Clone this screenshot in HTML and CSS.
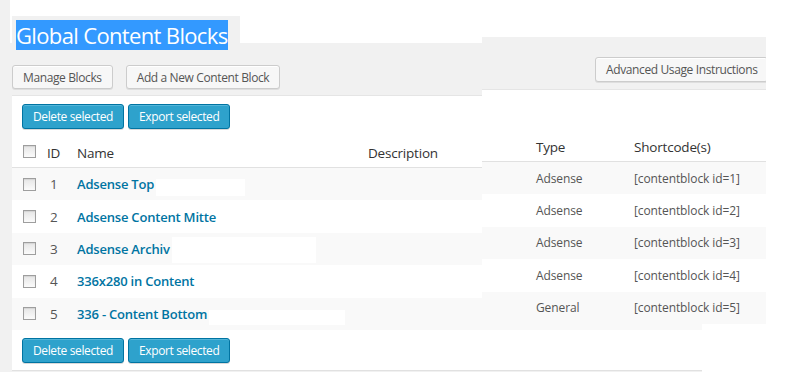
FILE: index.html
```html
<!DOCTYPE html>
<html lang="en">
    <head>
        <meta charset="UTF-8" />
        <title>Global Content Blocks</title>
        <link rel="stylesheet" href="styles.css">
    </head>
    <body>
        <div class="screen">
            <div class="admin">
                <div class="side"></div>
                <div class="main">
                    <div class="top-gap"></div>
                    <div class="title-row">
                        <div class="title-cell">
                            <h1 class="title"><span class="selected">Global Content Blocks</span></h1>
                        </div>
                    </div>
                    <div class="body">
                        <div class="actions">
                            <button class="button">Manage Blocks</button>
                            <button class="button">Add a New Content Block</button>
                        </div>
                        <div class="list-box">
                            <div class="bulk">
                                <button class="button-primary">Delete selected</button>
                                <button class="button-primary">Export selected</button>
                            </div>
                            <div class="list-head">
                                <span class="cell"><input type="checkbox" class="cb" /></span>
                                <span class="cell">ID</span>
                                <span class="cell">Name</span>
                                <span class="cell">Description</span>
                            </div>
                            <div class="list-row">
                                <span class="cell"><input type="checkbox" class="cb" /></span>
                                <span class="cell num">1</span>
                                <span class="cell"><a class="name">Adsense Top</a><span class="blank b1"></span></span>
                                <span class="cell"></span>
                            </div>
                            <div class="list-row">
                                <span class="cell"><input type="checkbox" class="cb" /></span>
                                <span class="cell num">2</span>
                                <span class="cell"><a class="name">Adsense Content Mitte</a></span>
                                <span class="cell"></span>
                            </div>
                            <div class="list-row">
                                <span class="cell"><input type="checkbox" class="cb" /></span>
                                <span class="cell num">3</span>
                                <span class="cell"><a class="name">Adsense Archiv</a><span class="blank b3"></span></span>
                                <span class="cell"></span>
                            </div>
                            <div class="list-row">
                                <span class="cell"><input type="checkbox" class="cb" /></span>
                                <span class="cell num">4</span>
                                <span class="cell"><a class="name">336x280 in Content</a></span>
                                <span class="cell"></span>
                            </div>
                            <div class="list-row">
                                <span class="cell"><input type="checkbox" class="cb" /></span>
                                <span class="cell num">5</span>
                                <span class="cell"><a class="name">336 - Content Bottom</a><span class="blank b5"></span></span>
                                <span class="cell"></span>
                            </div>
                            <div class="bulk">
                                <button class="button-primary">Delete selected</button>
                                <button class="button-primary">Export selected</button>
                            </div>
                        </div>
                    </div>
                </div>
            </div>

            <!-- right part of the page, pasted a few pixels higher -->
            <div class="patch">
                <div class="patch-top"></div>
                <div class="patch-bar">
                    <button class="button">Advanced Usage Instructions</button>
                </div>
                <div class="patch-box">
                    <div class="patch-spacer"></div>
                    <div class="patch-head">
                        <span class="cell">Type</span>
                        <span class="cell">Shortcode(s)</span>
                    </div>
                    <div class="patch-row"><span class="cell">Adsense</span><span class="cell">[contentblock id=1]</span></div>
                    <div class="patch-row"><span class="cell">Adsense</span><span class="cell">[contentblock id=2]</span></div>
                    <div class="patch-row"><span class="cell">Adsense</span><span class="cell">[contentblock id=3]</span></div>
                    <div class="patch-row"><span class="cell">Adsense</span><span class="cell">[contentblock id=4]</span></div>
                    <div class="patch-row"><span class="cell">General</span><span class="cell">[contentblock id=5]</span></div>
                </div>
            </div>
        </div>
    </body>
</html>
```

FILE: styles.css
```css
* {
    margin: 0;
    padding: 0;
    box-sizing: border-box;
}
body {
    font-family: "Open Sans", "Noto Sans", sans-serif;
    font-size: 13px;
    color: #444;
    background: white;
}

.screen {
    position: relative;
    width: 807px;
    height: 372px;
    overflow: hidden;
}

.admin {
    display: flex;
    width: 702px;
    height: 372px;
}
.side {
    width: 10px;
    background: #f1f1f1;
}
.main {
    flex: 1;
    display: flex;
    flex-direction: column;
    background: white;
}
.top-gap {
    height: 16px;
}
.title-row {
    position: relative;
    z-index: 1;
    height: 27px;
    display: flex;
}
.title-cell {
    width: 228px;
    margin-left: 2px;
    background: #f1f1f1;
}
.title {
    font-weight: normal;
    font-size: 22px;
    line-height: 30px;
}
.selected {
    display: inline-block;
    margin: 4px 0 0 4px;
    height: 30px;
    background: #3399ff;
    color: white;
    letter-spacing: -0.65px;
}

.body {
    flex: 1;
    background: #f1f1f1;
    padding: 22px 0 0 2px;
}
.actions {
    display: flex;
    gap: 13px;
}

.button,
.button-primary {
    font-family: inherit;
    font-size: 12px;
    letter-spacing: -0.38px;
    height: 24px;
    padding: 0 10px;
    border-radius: 3px;
    white-space: nowrap;
    cursor: pointer;
}
.button {
    color: #555;
    background: #f7f7f7;
    border: 1px solid #ccc;
    box-shadow: inset 0 1px 0 #fff, 0 1px 0 rgba(0, 0, 0, 0.08);
}
.button-primary {
    height: 25px;
    color: white;
    background: #2ea2cc;
    border: 1px solid #0074a2;
    box-shadow: inset 0 1px 0 rgba(120, 200, 230, 0.5), 0 1px 0 rgba(0, 0, 0, 0.15);
}

.list-box {
    margin-top: 6px;
    background: white;
    border-top: 1px solid #e5e5e5;
    border-bottom: 1px solid #e1e1e1;
    padding-bottom: 7px;
}
.bulk {
    display: flex;
    gap: 4px;
    padding: 8px 0 0 10px;
}

.list-head,
.list-row {
    display: grid;
    grid-template-columns: 24px 30px 291px 1fr;
    padding-left: 11px;
}
.list-head {
    height: 39px;
    padding-top: 14px;
    border-bottom: 1px solid #e1e1e1;
    font-size: 13.5px;
    letter-spacing: -0.2px;
    line-height: 20px;
    color: #333;
}
.list-row {
    height: 32.4px;
}
.list-row:nth-child(odd) {
    background: #f9f9f9;
}
.list-row .cell {
    display: flex;
    align-items: center;
}
.num {
    padding-left: 3px;
    color: #555;
    font-size: 13.5px;
}
.name {
    color: #0074a2;
    font-weight: 600;
    font-size: 13px;
    letter-spacing: -0.2px;
    white-space: nowrap;
}

.cb {
    appearance: none;
    width: 13px;
    height: 13px;
    border: 1px solid #9e9e9e;
    background: linear-gradient(#e6e6e6, #fbfbfb);
    box-shadow: inset 0 1px 1px rgba(0, 0, 0, 0.08);
}
.list-head .cb {
    margin-top: 1px;
}

/* white boxes that hide part of the row */
.blank {
    align-self: flex-start;
    margin-left: 2px;
    background: white;
}
.b1 {
    width: 89px;
    height: 17px;
    margin-top: 11px;
}
.b3 {
    width: 144px;
    height: 26px;
    margin-top: 4px;
}
.b5 {
    width: 136px;
    height: 15px;
    margin-top: 12px;
}

.patch {
    position: absolute;
    left: 482px;
    top: 0;
    width: 284px;
    height: 324px;
    overflow: hidden;
    background: white;
}
.patch-top {
    height: 37px;
}
.patch-bar {
    height: 53px;
    background: #f1f1f1;
    border-bottom: 1px solid #e5e5e5;
    padding: 20px 0 0 113px;
}
.patch-bar .button {
    height: 25px;
}
.patch-spacer {
    height: 33px;
}
.patch-head,
.patch-row {
    display: grid;
    grid-template-columns: 98px 1fr;
    padding-left: 54px;
}
.patch-head {
    height: 39px;
    padding-top: 14px;
    border-bottom: 1px solid #e1e1e1;
    font-size: 13.5px;
    letter-spacing: -0.2px;
    line-height: 20px;
    color: #333;
}
.patch-row {
    height: 32.4px;
    align-items: center;
    color: #555;
    font-size: 12px;
    letter-spacing: -0.1px;
    white-space: nowrap;
}
.patch-row:nth-child(odd) {
    background: #f9f9f9;
}
```
